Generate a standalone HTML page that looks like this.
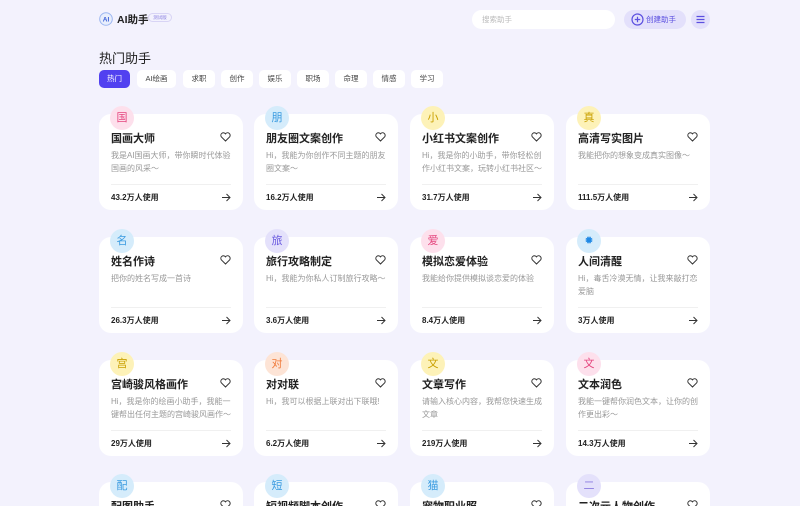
<!DOCTYPE html>
<html><head><meta charset="utf-8"><style>
*{margin:0;padding:0;box-sizing:border-box}
html{width:800px;height:506px;overflow:hidden}
body{width:800px;height:506px;overflow:hidden;background:#f3f2fd;font-family:"Liberation Sans","Noto Sans CJK SC",sans-serif;position:relative;color:#222}
.abs{position:absolute}
svg{display:block}
.card{position:absolute;width:144px;height:96px;background:#fff;border-radius:12px}
.av{position:absolute;left:11px;top:-8px;width:24px;height:24px;border-radius:50%;font-size:11px;text-align:center;line-height:24px}
.t{position:absolute;left:12px;top:16px;font-size:11px;font-weight:bold;color:#222}
.h{position:absolute;right:12px;top:18px;line-height:0}
.d{position:absolute;left:12px;top:35px;width:122px;font-size:8px;line-height:13px;color:#999}
.ln{position:absolute;left:12px;right:12px;top:70px;border-top:1px solid #f0f0f0}
.u{position:absolute;left:12px;top:78px;font-size:8px;font-weight:bold;color:#222}
.ar{position:absolute;right:12px;top:79px;line-height:0}
.tab{position:absolute;top:70px;height:18px;border-radius:5px;background:#fff;font-size:7.5px;color:#444;text-align:center;line-height:18px}
</style></head><body>
<svg class="abs" style="left:99px;top:12px" width="14" height="14" viewBox="0 0 14 14"><circle cx="7" cy="7" r="6.3" fill="#e8eefc" stroke="#9cb6f0" stroke-width="1"/><text x="7" y="9.5" font-size="6.5" text-anchor="middle" fill="#3b5fd8" font-weight="bold" font-family="Liberation Sans">AI</text></svg>
<div class="abs" style="left:117px;top:12px;font-size:10.5px;font-weight:bold">AI助手</div>
<div class="abs" style="left:148px;top:13px;width:24px;height:9px;border:1px solid #d8d4f5;border-radius:5px;font-size:4.5px;color:#8a80e0;text-align:center;line-height:8px">测试版</div>
<div class="abs" style="left:472px;top:10px;width:143px;height:19px;border-radius:10px;background:#fff;font-size:7.5px;color:#bbb;line-height:19px;padding-left:10px">搜索助手</div>
<div class="abs" style="left:624px;top:10px;width:62px;height:19px;border-radius:10px;background:#e3e0fb;font-size:7.5px;color:#5b4fe0;line-height:19px;padding-left:22px">创建助手</div>
<svg class="abs" style="left:631px;top:13px" width="13" height="13" viewBox="0 0 13 13"><circle cx="6.5" cy="6.5" r="5.5" fill="none" stroke="#5b4fe0" stroke-width="1.2"/><path d="M6.5 3.8v5.4M3.8 6.5h5.4" stroke="#5b4fe0" stroke-width="1.2"/></svg>
<div class="abs" style="left:691px;top:10px;width:19px;height:19px;border-radius:50%;background:#e3e0fb"></div>
<svg class="abs" style="left:695px;top:14px" width="11" height="11" viewBox="0 0 11 11"><path d="M1.5 2.5h8M1.5 5.5h8M1.5 8.5h8" stroke="#5b4fe0" stroke-width="1.2"/></svg>
<div class="abs" style="left:99px;top:48px;font-size:13px;color:#222">热门助手</div>
<div class="tab" style="left:99px;width:31px;background:#5141f0;color:#fff">热门</div>
<div class="tab" style="left:137px;width:39px">AI绘画</div>
<div class="tab" style="left:183px;width:32px">求职</div>
<div class="tab" style="left:221px;width:32px">创作</div>
<div class="tab" style="left:259px;width:32px">娱乐</div>
<div class="tab" style="left:297px;width:32px">职场</div>
<div class="tab" style="left:335px;width:32px">命理</div>
<div class="tab" style="left:373px;width:32px">情感</div>
<div class="tab" style="left:411px;width:32px">学习</div>
<div id="g"></div>
<script>
var D=[
["国","#fde0ec","#e5457e","国画大师","我是AI国画大师，带你瞬时代体验国画的风采～","43.2万人使用"],
["朋","#d5ecfb","#3a9be0","朋友圈文案创作","Hi，我能为你创作不同主题的朋友圈文案～","16.2万人使用"],
["小","#fdf2b8","#c9a000","小红书文案创作","Hi，我是你的小助手，带你轻松创作小红书文案，玩转小红书社区～","31.7万人使用"],
["真","#fdf2b8","#c9a000","高清写实图片","我能把你的想象变成真实图像～","111.5万人使用"],
["名","#d5ecfb","#3a9be0","姓名作诗","把你的姓名写成一首诗","26.3万人使用"],
["旅","#e4e1fb","#6a5ae0","旅行攻略制定","Hi，我能为你私人订制旅行攻略～","3.6万人使用"],
["爱","#fde0ec","#e5457e","模拟恋爱体验","我能给你提供模拟谈恋爱的体验","8.4万人使用"],
["✹","#d5ecfb","#1e88e5","人间清醒","Hi，毒舌冷漠无情，让我来敲打恋爱脑","3万人使用"],
["宫","#fdf2b8","#c9a000","宫崎骏风格画作","Hi，我是你的绘画小助手，我能一键帮出任何主题的宫崎骏风画作～","29万人使用"],
["对","#fde4d6","#f07a3a","对对联","Hi，我可以根据上联对出下联哦!","6.2万人使用"],
["文","#fdf2b8","#c9a000","文章写作","请输入核心内容，我帮您快速生成文章","219万人使用"],
["文","#fde0ec","#e5457e","文本润色","我能一键帮你润色文本，让你的创作更出彩～","14.3万人使用"],
["配","#d5ecfb","#3a9be0","配图助手","",""],
["短","#d5ecfb","#3a9be0","短视频脚本创作","",""],
["猫","#d5ecfb","#3a9be0","宠物职业照","",""],
["二","#e4e1fb","#8a7ae0","二次元人物创作","",""]];
var X=[99,254,410,566],Y=[114,237,360,482],h="";
var heart='<svg width="11" height="10" viewBox="0 0 11 10"><path d="M5.5 9L1.3 4.8A2.3 2.3 0 0 1 5.5 1.9A2.3 2.3 0 0 1 9.7 4.8Z" fill="none" stroke="#333" stroke-width="1"/></svg>';
var arr='<svg width="10" height="9" viewBox="0 0 10 9"><path d="M1 4.5h8M5.5 1l3.5 3.5L5.5 8" fill="none" stroke="#333" stroke-width="1"/></svg>';
D.forEach(function(d,i){var x=X[i%4],y=Y[Math.floor(i/4)];
h+='<div class="card" style="left:'+x+'px;top:'+y+'px;'+(y>400?'height:24px;border-radius:12px 12px 0 0':'')+'"><div class="av" style="background:'+d[1]+';color:'+d[2]+'">'+d[0]+'</div><div class="t">'+d[3]+'</div><div class="h">'+heart+'</div>'+(y>400?'':'<div class="d">'+d[4]+'</div><div class="ln"></div><div class="u">'+d[5]+'</div><div class="ar">'+arr+'</div>')+'</div>';});
document.getElementById("g").innerHTML=h;
</script>
</body></html>
